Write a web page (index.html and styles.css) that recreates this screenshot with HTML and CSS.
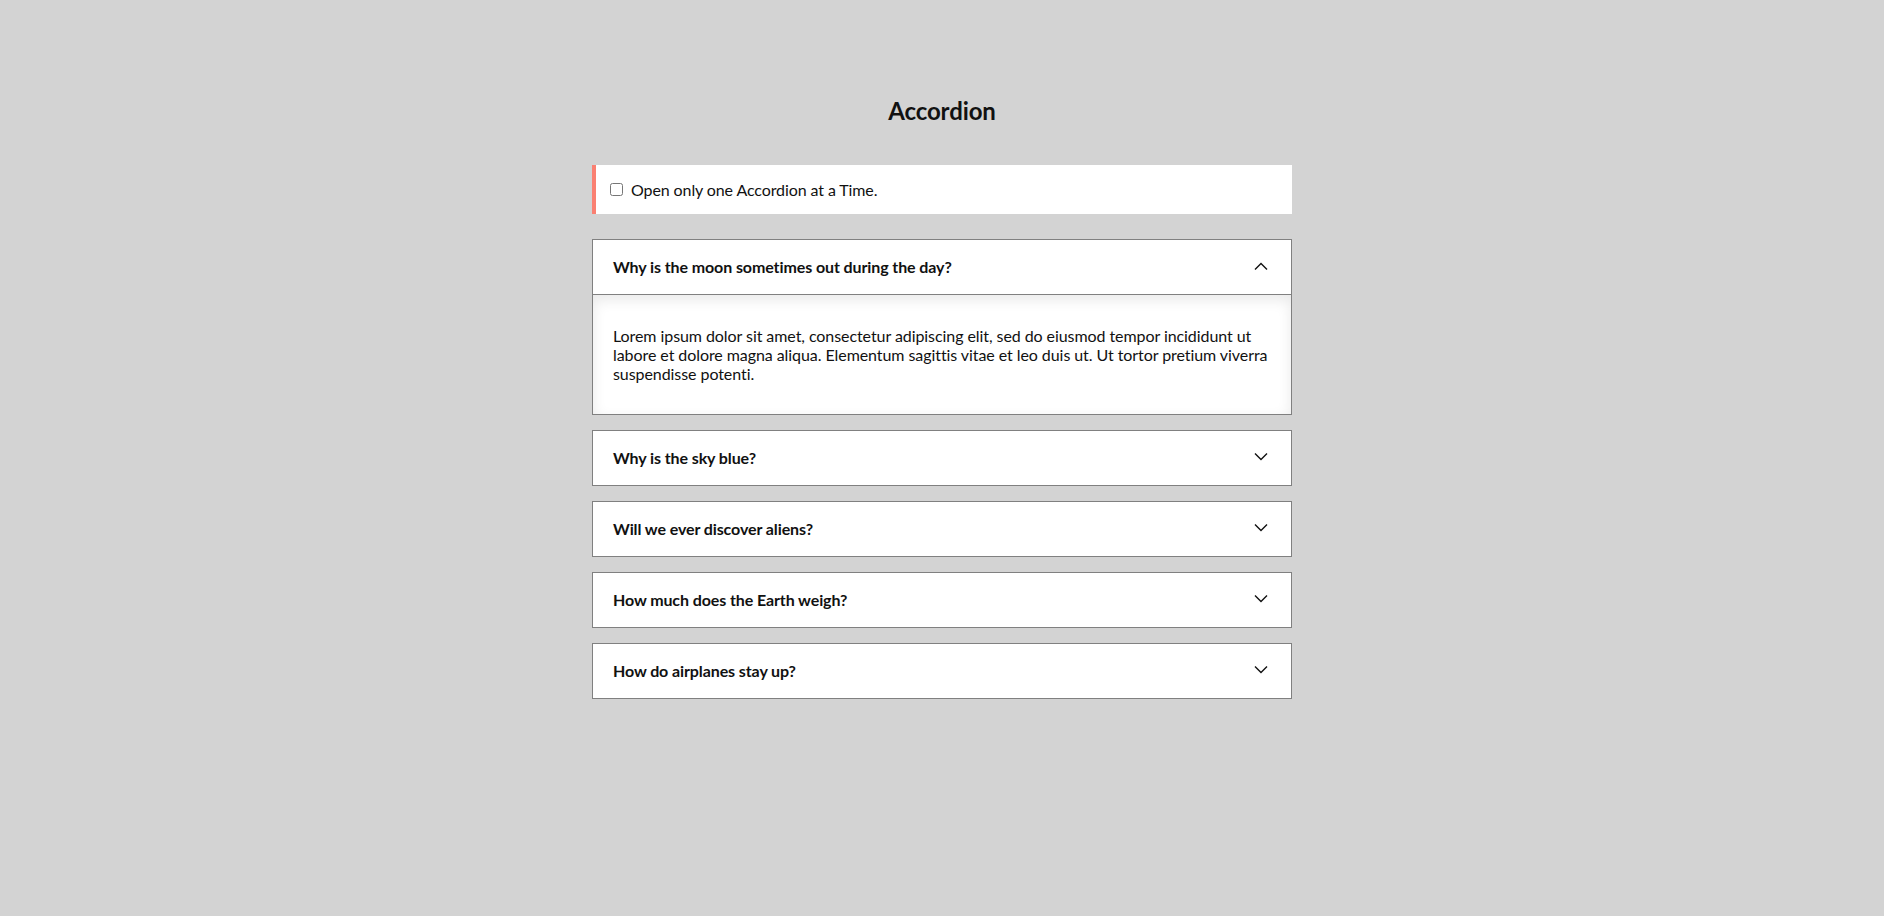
FILE: index.html
```html
<!DOCTYPE html>
<html lang="en">
<head>
<meta charset="utf-8">
<title>Accordion</title>
<link rel="stylesheet" href="styles.css">
</head>
<body>
<main class="page">
  <h1 class="title">Accordion</h1>
  <div class="notice">
    <label class="notice-label"><input type="checkbox" class="notice-check"> Open only one Accordion at a Time.</label>
  </div>
  <div class="accordion">
    <section class="item open">
      <div class="item-head">
        <span class="item-title">Why is the moon sometimes out during the day?</span>
        <svg class="chev" width="16" height="16" viewBox="0 0 16 16"><path d="M2 10.5 L8 4.5 L14 10.5" fill="none" stroke="#111" stroke-width="1.4"/></svg>
      </div>
      <div class="item-body">
        <p class="item-text">Lorem ipsum dolor sit amet, consectetur adipiscing elit, sed do eiusmod tempor incididunt ut labore et dolore magna aliqua. Elementum sagittis vitae et leo duis ut. Ut tortor pretium viverra suspendisse potenti.</p>
      </div>
    </section>
    <section class="item">
      <div class="item-head">
        <span class="item-title">Why is the sky blue?</span>
        <svg class="chev" width="16" height="16" viewBox="0 0 16 16"><path d="M2 3.5 L8 9.5 L14 3.5" fill="none" stroke="#111" stroke-width="1.4"/></svg>
      </div>
    </section>
    <section class="item">
      <div class="item-head">
        <span class="item-title">Will we ever discover aliens?</span>
        <svg class="chev" width="16" height="16" viewBox="0 0 16 16"><path d="M2 3.5 L8 9.5 L14 3.5" fill="none" stroke="#111" stroke-width="1.4"/></svg>
      </div>
    </section>
    <section class="item">
      <div class="item-head">
        <span class="item-title">How much does the Earth weigh?</span>
        <svg class="chev" width="16" height="16" viewBox="0 0 16 16"><path d="M2 3.5 L8 9.5 L14 3.5" fill="none" stroke="#111" stroke-width="1.4"/></svg>
      </div>
    </section>
    <section class="item">
      <div class="item-head">
        <span class="item-title">How do airplanes stay up?</span>
        <svg class="chev" width="16" height="16" viewBox="0 0 16 16"><path d="M2 3.5 L8 9.5 L14 3.5" fill="none" stroke="#111" stroke-width="1.4"/></svg>
      </div>
    </section>
  </div>
</main>
</body>
</html>
```

FILE: styles.css
```css
html, body {
  margin: 0;
  padding: 0;
}
body {
  background: #d3d3d3;
  font-family: Lato, "Open Sans", sans-serif;
  font-size: 16px;
  color: #111;
  min-height: 916px;
  font-variant-ligatures: none;
}
.page {
  width: 700px;
  margin: 0 auto;
  padding-top: 97px;
}
.title {
  margin: 0 0 39px;
  font-size: 24px;
  font-weight: 700;
  line-height: 28.8px;
  text-align: center;
  color: #111;
  letter-spacing: -0.1px;
}
.notice {
  background: #fff;
  border-left: 4px solid #fa8072;
  padding: 15px 10px 15px 10px;
  height: 19px;
  display: flex;
  align-items: center;
  margin-bottom: 25px;
}
.notice-label {
  display: flex;
  align-items: center;
  line-height: 19px;
  letter-spacing: -0.1px;
}
.notice-check {
  width: 13px;
  height: 13px;
  margin: 0 8px 0 4px;
}
.accordion {
  display: flex;
  flex-direction: column;
  gap: 15px;
}
.item {
  background: #fff;
  border: 1px solid #808080;
}
.item-head {
  display: flex;
  align-items: center;
  justify-content: space-between;
  padding: 17px 22px 17px 20px;
  height: 20px;
}
.item-title {
  font-weight: 700;
  line-height: 20px;
  letter-spacing: -0.1px;
}
.chev {
  display: block;
}
.item.open .item-head {
  border-bottom: 1px solid #808080;
}
.item-body {
  padding: 31px 20px 31px;
  box-shadow: inset 0 5px 14px rgba(0, 0, 0, 0.09);
}
.item-text {
  margin: 0;
  line-height: 19.2px;
  letter-spacing: -0.07px;
}
```
